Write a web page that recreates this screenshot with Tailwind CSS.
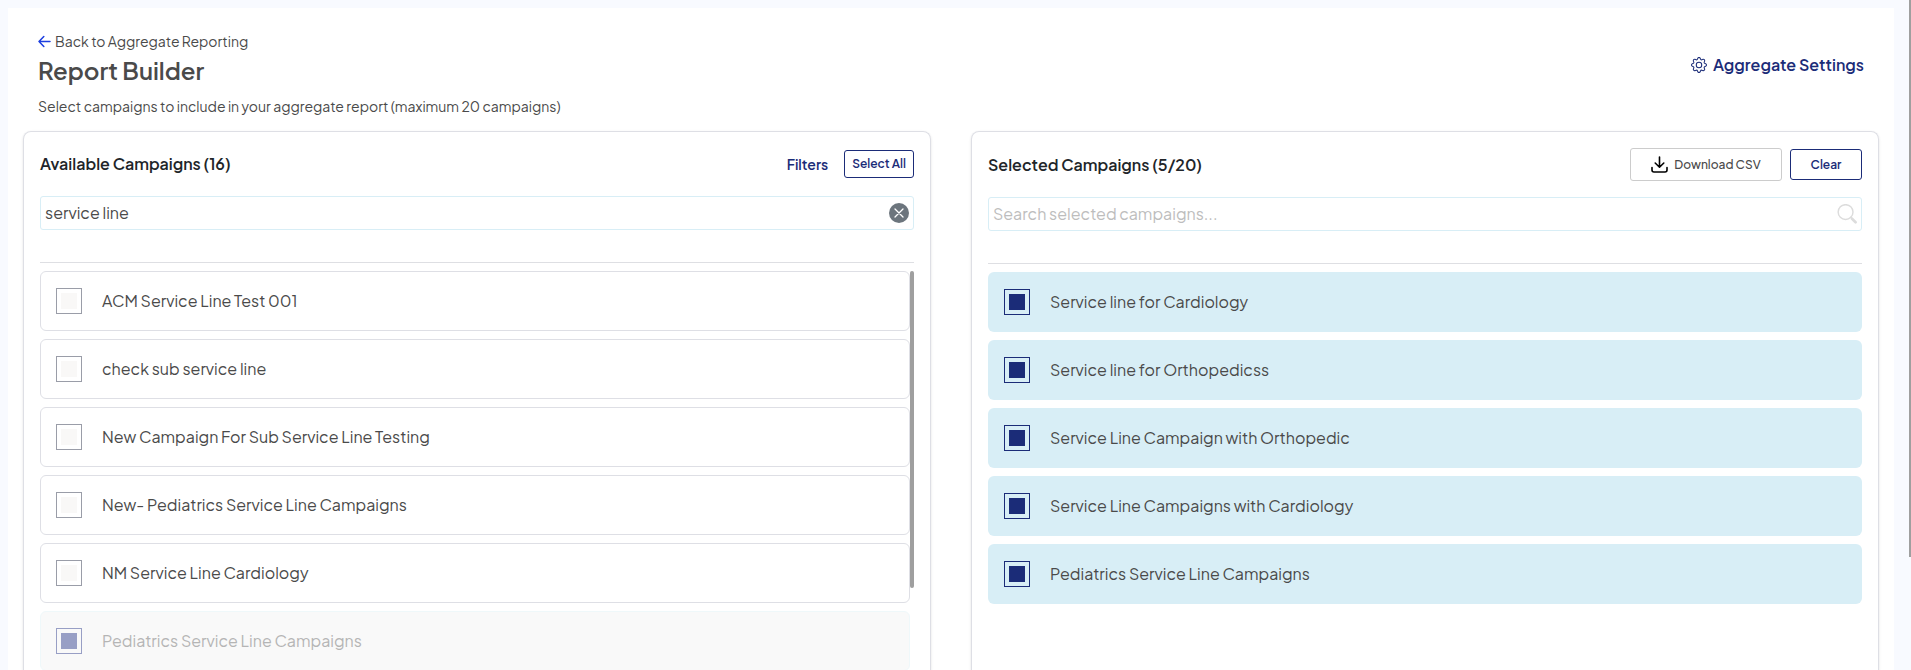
<!DOCTYPE html>
<html lang="en">
<head>
    <meta charset="UTF-8">
    <meta name="viewport" content="width=device-width, initial-scale=1.0">
    <title>Report Builder</title>
    <script src="https://cdn.jsdelivr.net/npm/@tailwindcss/browser@4"></script>
</head>
<body class="bg-[#f8faff] font-['Plus_Jakarta_Sans','Inter',sans-serif] text-[#4a4a4a]">
    <div class="flex h-screen overflow-hidden">
        <main class="flex-1 min-w-0 mt-2 ml-2 mr-[15px] px-[15px] bg-white flex flex-col">
            <!-- Page header -->
            <header class="flex items-start justify-between px-[15px] pt-[23px] h-[123px] shrink-0">
                <div>
                    <a href="#" class="flex items-center gap-1 text-sm leading-5">
                        <svg class="w-[13px] h-[13px] text-[#1d3fe0]" viewBox="0 0 13 13" fill="none" stroke="currentColor" stroke-width="1.5" stroke-linecap="round" stroke-linejoin="round"><path d="M12 6.500H1M5.800 1.500 1 6.500 5.800 11.500"/></svg>
                        Back to Aggregate Reporting
                    </a>
                    <h1 class="text-2xl leading-8 font-semibold mt-[3px]">Report Builder</h1>
                    <p class="text-sm leading-5 mt-2.5">Select campaigns to include in your aggregate report (maximum 20 campaigns)</p>
                </div>
                <a href="#" class="flex items-center gap-1.5 mt-[22px] text-base leading-6 font-semibold text-[#1b2c78]">
                    <svg class="w-4 h-4" viewBox="0 0 16 16" fill="currentColor"><path d="M8 4.754a3.246 3.246 0 1 0 0 6.492 3.246 3.246 0 0 0 0-6.492zM5.754 8a2.246 2.246 0 1 1 4.492 0 2.246 2.246 0 0 1-4.492 0z"/><path d="M9.796 1.343c-.527-1.79-3.065-1.79-3.592 0l-.094.319a.873.873 0 0 1-1.255.52l-.292-.16c-1.64-.892-3.433.902-2.54 2.541l.159.292a.873.873 0 0 1-.52 1.255l-.319.094c-1.79.527-1.79 3.065 0 3.592l.319.094a.873.873 0 0 1 .52 1.255l-.16.292c-.892 1.64.901 3.434 2.541 2.54l.292-.159a.873.873 0 0 1 1.255.52l.094.319c.527 1.79 3.065 1.79 3.592 0l.094-.319a.873.873 0 0 1 1.255-.52l.292.16c1.64.893 3.434-.902 2.54-2.541l-.159-.292a.873.873 0 0 1 .52-1.255l.319-.094c1.79-.527 1.79-3.065 0-3.592l-.319-.094a.873.873 0 0 1-.52-1.255l.16-.292c.893-1.64-.902-3.433-2.541-2.54l-.292.159a.873.873 0 0 1-1.255-.52l-.094-.319zm-2.633.283c.246-.835 1.428-.835 1.674 0l.094.319a1.873 1.873 0 0 0 2.693 1.115l.291-.16c.764-.415 1.6.42 1.184 1.185l-.159.292a1.873 1.873 0 0 0 1.116 2.692l.318.094c.835.246.835 1.428 0 1.674l-.319.094a1.873 1.873 0 0 0-1.115 2.693l.16.291c.415.764-.42 1.6-1.185 1.184l-.291-.159a1.873 1.873 0 0 0-2.693 1.116l-.094.318c-.246.835-1.428.835-1.674 0l-.094-.319a1.873 1.873 0 0 0-2.692-1.115l-.292.16c-.764.415-1.6-.42-1.184-1.185l.159-.291A1.873 1.873 0 0 0 1.945 8.93l-.319-.094c-.835-.246-.835-1.428 0-1.674l.319-.094A1.873 1.873 0 0 0 3.06 4.377l-.16-.292c-.415-.764.42-1.6 1.185-1.184l.292.159a1.873 1.873 0 0 0 2.692-1.115l.094-.319z"/></svg>
                    Aggregate Settings
                </a>
            </header>

            <div class="flex-1 grid grid-cols-2 gap-10 min-h-0">
                <!-- Available campaigns -->
                <section class="border border-b-0 border-[#dedfe5] rounded-t-lg shadow-sm p-4 pb-0 flex flex-col min-h-0">
                    <div class="flex items-center justify-between h-8 shrink-0">
                        <h2 class="text-base font-semibold text-[#212529]">Available Campaigns (16)</h2>
                        <div class="flex items-center gap-4">
                            <button type="button" class="text-sm font-semibold text-[#1b2c78]">Filters</button>
                            <button type="button" class="h-7 px-[7px] border border-[#1b2c78] rounded-[3px] text-xs font-semibold text-[#1b2c78]">Select All</button>
                        </div>
                    </div>
                    <div class="relative mt-4 shrink-0">
                        <input type="text" aria-label="Search available campaigns" value="service line" class="block w-full h-[34px] pl-1 pr-8 pb-0.5 border border-[#d8eef6] rounded-[3px] text-base outline-none">
                        <button type="button" aria-label="Clear search" class="absolute right-[5px] top-[7px]">
                            <svg class="block w-5 h-5" viewBox="0 0 20 20"><circle cx="10" cy="10" r="10" fill="#6c757d"/><path d="M6 6l8 8M14 6l-8 8" stroke="#fff" stroke-width="1.3" stroke-linecap="round"/></svg>
                        </button>
                    </div>
                    <hr class="mt-8 border-[#dedfe3] shrink-0">
                    <div class="flex mt-2 min-h-0 overflow-hidden">
                        <div class="flex-1 flex flex-col gap-2">
                            <label class="flex items-center gap-5 h-[60px] shrink-0 px-[15px] border border-[#dedfe5] rounded-md">
                                <input type="checkbox" class="appearance-none w-[26px] h-[26px] p-1 border border-[#9a9da8] bg-[#f9f8f7] bg-clip-content checked:border-[#1b2c78] checked:bg-[#1b2c78]">
                                ACM Service Line Test 001
                            </label>
                            <label class="flex items-center gap-5 h-[60px] shrink-0 px-[15px] border border-[#dedfe5] rounded-md">
                                <input type="checkbox" class="appearance-none w-[26px] h-[26px] p-1 border border-[#9a9da8] bg-[#f9f8f7] bg-clip-content checked:border-[#1b2c78] checked:bg-[#1b2c78]">
                                check sub service line
                            </label>
                            <label class="flex items-center gap-5 h-[60px] shrink-0 px-[15px] border border-[#dedfe5] rounded-md">
                                <input type="checkbox" class="appearance-none w-[26px] h-[26px] p-1 border border-[#9a9da8] bg-[#f9f8f7] bg-clip-content checked:border-[#1b2c78] checked:bg-[#1b2c78]">
                                New Campaign For Sub Service Line Testing
                            </label>
                            <label class="flex items-center gap-5 h-[60px] shrink-0 px-[15px] border border-[#dedfe5] rounded-md">
                                <input type="checkbox" class="appearance-none w-[26px] h-[26px] p-1 border border-[#9a9da8] bg-[#f9f8f7] bg-clip-content checked:border-[#1b2c78] checked:bg-[#1b2c78]">
                                New- Pediatrics Service Line Campaigns
                            </label>
                            <label class="flex items-center gap-5 h-[60px] shrink-0 px-[15px] border border-[#dedfe5] rounded-md">
                                <input type="checkbox" class="appearance-none w-[26px] h-[26px] p-1 border border-[#9a9da8] bg-[#f9f8f7] bg-clip-content checked:border-[#1b2c78] checked:bg-[#1b2c78]">
                                NM Service Line Cardiology
                            </label>
                            <label class="flex items-center gap-5 h-[60px] shrink-0 px-[15px] border border-[#eff8fa] bg-[#f9f9f9] rounded-md text-[#b5b5b5]">
                                <input type="checkbox" checked disabled class="appearance-none w-[26px] h-[26px] p-1 border border-[#989fc5] bg-[#989fc5] bg-clip-content">
                                Pediatrics Service Line Campaigns
                            </label>
                        </div>
                        <div class="w-1 h-[317px] rounded-sm bg-[#9f9f9f]"></div>
                    </div>
                </section>

                <!-- Selected campaigns -->
                <section class="border border-b-0 border-[#dedfe5] rounded-t-lg shadow-sm p-4 pb-0 flex flex-col min-h-0">
                    <div class="flex items-center justify-between h-[33px] shrink-0">
                        <h2 class="text-base font-semibold text-[#212529]">Selected Campaigns (5/20)</h2>
                        <div class="flex items-center gap-2">
                            <button type="button" class="flex items-center justify-center gap-1.5 w-[152px] h-[33px] border border-[#cccccc] rounded-[3px] text-xs font-medium">
                                <svg class="w-[17px] h-[17px] text-black" viewBox="0 0 17 17" fill="none" stroke="currentColor" stroke-width="1.6" stroke-linecap="round" stroke-linejoin="round"><path d="M8.5 1v10M4.2 7l4.3 4.2L12.800 7M1 11.500v2.500a2 2 0 0 0 2 2h11a2 2 0 0 0 2-2v-2.500"/></svg>
                                Download CSV
                            </button>
                            <button type="button" class="w-[72px] h-[31px] border border-[#1b2c78] rounded-[3px] text-xs font-semibold text-[#1b2c78]">Clear</button>
                        </div>
                    </div>
                    <div class="relative mt-4 shrink-0">
                        <input type="text" aria-label="Search selected campaigns" placeholder="Search selected campaigns..." class="block w-full h-[34px] pl-1 pr-8 pb-0.5 border border-[#d8eef6] rounded-[3px] text-base outline-none placeholder:text-[#bdbdbd]">
                        <svg class="absolute right-[5px] top-[7px] w-5 h-5 text-[#dcdcdc]" viewBox="0 0 21 21" fill="none" stroke="currentColor" stroke-linecap="round"><circle cx="9" cy="8.500" r="7.800" stroke-width="1.500"/><path d="M14.500 14l1 1" stroke-width="1.500"/><path d="M15.800 15.500l3.700 3.700" stroke-width="2.800"/></svg>
                    </div>
                    <hr class="mt-8 border-[#dedfe3] shrink-0">
                    <div class="flex flex-col gap-2 mt-2">
                        <label class="flex items-center gap-5 h-[60px] shrink-0 px-4 bg-[#d8eef6] rounded-md">
                            <input type="checkbox" checked class="appearance-none w-[26px] h-[26px] p-1 border border-[#1b2c78] bg-clip-content checked:bg-[#1b2c78]">
                            Service line for Cardiology
                        </label>
                        <label class="flex items-center gap-5 h-[60px] shrink-0 px-4 bg-[#d8eef6] rounded-md">
                            <input type="checkbox" checked class="appearance-none w-[26px] h-[26px] p-1 border border-[#1b2c78] bg-clip-content checked:bg-[#1b2c78]">
                            Service line for Orthopedicss
                        </label>
                        <label class="flex items-center gap-5 h-[60px] shrink-0 px-4 bg-[#d8eef6] rounded-md">
                            <input type="checkbox" checked class="appearance-none w-[26px] h-[26px] p-1 border border-[#1b2c78] bg-clip-content checked:bg-[#1b2c78]">
                            Service Line Campaign with Orthopedic
                        </label>
                        <label class="flex items-center gap-5 h-[60px] shrink-0 px-4 bg-[#d8eef6] rounded-md">
                            <input type="checkbox" checked class="appearance-none w-[26px] h-[26px] p-1 border border-[#1b2c78] bg-clip-content checked:bg-[#1b2c78]">
                            Service Line Campaigns with Cardiology
                        </label>
                        <label class="flex items-center gap-5 h-[60px] shrink-0 px-4 bg-[#d8eef6] rounded-md">
                            <input type="checkbox" checked class="appearance-none w-[26px] h-[26px] p-1 border border-[#1b2c78] bg-clip-content checked:bg-[#1b2c78]">
                            Pediatrics Service Line Campaigns
                        </label>
                    </div>
                </section>
            </div>
        </main>
        <div class="w-0.5 h-[557px] bg-[#9f9f9f]"></div>
    </div>
</body>
</html>
